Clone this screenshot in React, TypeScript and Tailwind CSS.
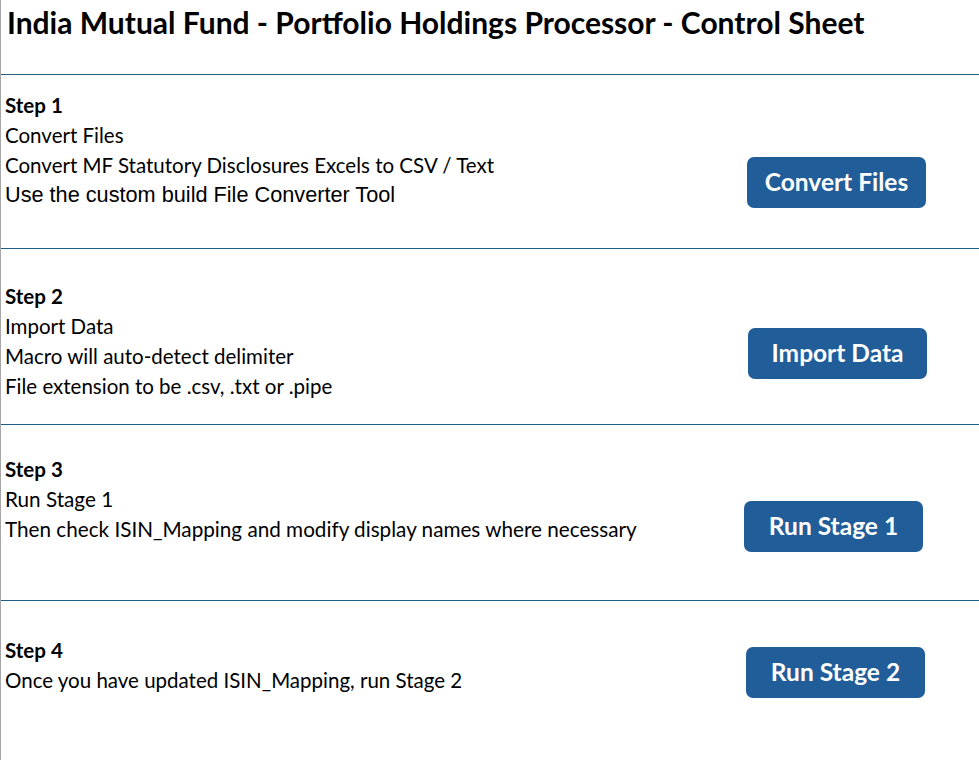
import React from "react";

type Step = {
  title: string;
  lines: { text: string; font?: "arial" | "narrow" }[];
  button: string;
  pt: string;
  btnTop: string;
  btnRight: string;
  height: string;
};

const steps: Step[] = [
  {
    title: "Step 1",
    lines: [
      { text: "Convert Files" },
      { text: "Convert MF Statutory Disclosures Excels to CSV / Text" },
      { text: "Use the custom build File Converter Tool", font: "arial" },
    ],
    button: "Convert Files",
    pt: "pt-[15px]",
    btnTop: "mt-[82px]",
    btnRight: "mr-[53px]",
    height: "h-[174px]",
  },
  {
    title: "Step 2",
    lines: [
      { text: "Import Data" },
      { text: "Macro will auto-detect delimiter" },
      { text: "File extension to be .csv, .txt or .pipe" },
    ],
    button: "Import Data",
    pt: "pt-[32px]",
    btnTop: "mt-[79px]",
    btnRight: "mr-[52px]",
    height: "h-[176px]",
  },
  {
    title: "Step 3",
    lines: [
      { text: "Run Stage 1", font: "narrow" },
      { text: "Then check ISIN_Mapping and modify display names where necessary", font: "narrow" },
    ],
    button: "Run Stage 1",
    pt: "pt-[29px]",
    btnTop: "mt-[76px]",
    btnRight: "mr-[56px]",
    height: "h-[176px]",
  },
  {
    title: "Step 4",
    lines: [{ text: "Once you have updated ISIN_Mapping, run Stage 2" }],
    button: "Run Stage 2",
    pt: "pt-[34px]",
    btnTop: "mt-[46px]",
    btnRight: "mr-[54px]",
    height: "h-[159px]",
  },
];

function lineClass(font?: "arial" | "narrow") {
  if (font === "arial") return "font-['Liberation_Sans',sans-serif] text-[21.7px]";
  if (font === "narrow") return "font-['Lato',sans-serif] text-[20.7px]";
  return "font-['Lato',sans-serif] text-[20.5px]";
}

function StepRow({ step, last }: { step: Step; last: boolean }) {
  return (
    <div
      className={`flex items-start justify-between pl-[4px] ${step.height} ${
        last ? "" : "border-b border-[#1d5f89]"
      }`}
    >
      <div className={`flex flex-col ${step.pt}`}>
        <div className="h-[30px] leading-[30px] font-['Lato',sans-serif] text-[20.5px] font-bold text-black">
          {step.title}
        </div>
        {step.lines.map((l) => (
          <div key={l.text} className={`h-[30px] leading-[30px] whitespace-nowrap text-black ${lineClass(l.font)}`}>
            {l.text}
          </div>
        ))}
      </div>
      <button
        className={`${step.btnTop} ${step.btnRight} h-[51px] w-[179px] rounded-[7px] bg-[#215e99] font-['Lato',sans-serif] text-[24.5px] font-bold text-white`}
      >
        {step.button}
      </button>
    </div>
  );
}

export default function App() {
  return (
    <div className="h-[760px] w-[979px] overflow-hidden border-l border-[#a6a6a6] bg-white">
      <div className="h-[75px] border-b border-[#1d5f89] pl-[6px] pt-[2px]">
        <h1 className="font-['Lato',sans-serif] text-[30px] font-bold leading-[40px] text-black whitespace-nowrap">
          India Mutual Fund - Portfolio Holdings Processor - Control Sheet
        </h1>
      </div>
      {steps.map((s, i) => (
        <StepRow key={s.title} step={s} last={i === steps.length - 1} />
      ))}
    </div>
  );
}
